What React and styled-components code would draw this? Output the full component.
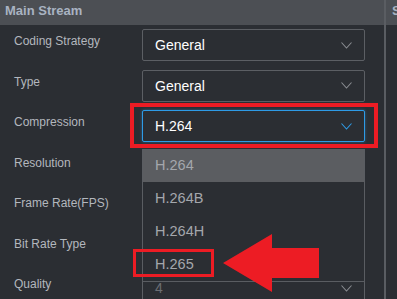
import * as React from "react";
import styled, { createGlobalStyle } from "styled-components";

const GlobalStyle = createGlobalStyle`
	html, body {
		margin: 0;
		padding: 0;
		background: #2b2e33;
		font-family: "Liberation Sans", Arial, sans-serif;
		overflow: hidden;
	}
`

const StyledPage = styled.div`
	position: relative;
	width: 397px;
	height: 299px;
	display: grid;
	grid-template-columns: 384px 2px 1fr;
	background: #2b2e33;
	overflow: hidden;
`
const StyledPanel = styled.section`
	display: flex;
	flex-direction: column;
	min-width: 0;
	overflow: hidden;
`
const StyledDivider = styled.div`
	background: #5a5d62;
`
const StyledHeader = styled.header`
	height: 25px;
	flex: none;
	background: #4c4f54;
	color: #a9b3c2;
	font-size: 13px;
	font-weight: bold;
	line-height: 21px;
	padding-left: ${(p) => p.$pad || 5}px;
	white-space: nowrap;
	overflow: hidden;
`
const StyledBody = styled.div`
	display: flex;
	flex-direction: column;
	gap: 8.5px;
	padding-top: 4px;
`
const StyledRow = styled.div`
	display: flex;
	align-items: flex-start;
	height: 32px;
	position: relative;
`
const StyledLabel = styled.label`
	width: 128px;
	padding-left: 14px;
	padding-top: 4px;
	font-size: 12px;
	line-height: 16px;
	color: #b3b7be;
	white-space: nowrap;
`
const StyledSelect = styled.div`
	box-sizing: border-box;
	width: 223px;
	height: 32px;
	display: flex;
	align-items: center;
	justify-content: space-between;
	padding: 0 12px 0 12px;
	border: 1px solid ${(p) => (p.$focused ? "#2e9be6" : "#5c5f64")};
	box-shadow: ${(p) => (p.$focused ? "0 0 3px rgba(46,155,230,0.5)" : "none")};
	border-radius: 2px;
	background: #2b2e33;
	color: ${(p) => (p.$dim ? "#6c6f74" : "#ffffff")};
	font-size: 14px;
`
const StyledList = styled.ul`
	position: absolute;
	left: 142px;
	top: 39px;
	width: 223px;
	box-sizing: border-box;
	margin: 0;
	padding: 0;
	list-style: none;
	background: #2b2e33;
	border: 1px solid #5a5d62;
	border-top: none;
	z-index: 2;
`
const StyledItem = styled.li`
	height: 33px;
	line-height: 32px;
	padding-left: 12px;
	font-size: 14.5px;
	color: #a4a7ac;
	background: ${(p) => (p.$active ? "#5b5d61" : "transparent")};
`
const StyledMark = styled.div`
	position: absolute;
	left: ${(p) => p.$x}px;
	top: ${(p) => p.$y}px;
	width: ${(p) => p.$w}px;
	height: ${(p) => p.$h}px;
	box-sizing: border-box;
	border: ${(p) => p.$t}px solid #ed1c24;
	z-index: 5;
`
const StyledArrow = styled.svg`
	position: absolute;
	left: 223px;
	top: 233px;
	z-index: 5;
`

const Chevron = ({ color }) => (
	<svg width="11" height="7" viewBox="0 0 11 7">
		<polyline points="0.5,0.5 5.5,6 10.5,0.5" fill="none" stroke={color} strokeWidth="1.1" />
	</svg>
)

const rows = [
	{ label: "Coding Strategy", value: "General" },
	{ label: "Type", value: "General" },
	{ label: "Compression", value: "H.264", focused: true },
	{ label: "Resolution", value: "" },
	{ label: "Frame Rate(FPS)", value: "" },
	{ label: "Bit Rate Type", value: "" },
	{ label: "Quality", value: "4", dim: true },
]

const options = ["H.264", "H.264B", "H.264H", "H.265"]

const App = () => {
	return (
		<StyledPage>
			<GlobalStyle />
			<StyledPanel>
				<StyledHeader>Main Stream</StyledHeader>
				<StyledBody>
					{rows.map((r) => (
						<StyledRow key={r.label}>
							<StyledLabel>{r.label}</StyledLabel>
							<StyledSelect $focused={r.focused} $dim={r.dim}>
								<span>{r.value}</span>
								<Chevron color={r.focused ? "#2e9be6" : "#8a8d92"} />
							</StyledSelect>
							{r.focused && (
								<StyledList>
									{options.map((o, i) => (
										<StyledItem key={o} $active={i === 0}>{o}</StyledItem>
									))}
								</StyledList>
							)}
						</StyledRow>
					))}
				</StyledBody>
			</StyledPanel>
			<StyledDivider />
			<StyledPanel>
				<StyledHeader $pad={6}>Sub Stream</StyledHeader>
			</StyledPanel>

			<StyledMark $x={130} $y={103} $w={248} $h={45} $t={4} />
			<StyledMark $x={133} $y={249} $w={81} $h={28} $t={3} />
			<StyledArrow width="96" height="60" viewBox="0 0 96 60">
				<polygon points="0,30 49,1 49,15 96,15 96,45 49,45 49,59" fill="#ed1c24" />
			</StyledArrow>
		</StyledPage>
	);
};

export default App;
